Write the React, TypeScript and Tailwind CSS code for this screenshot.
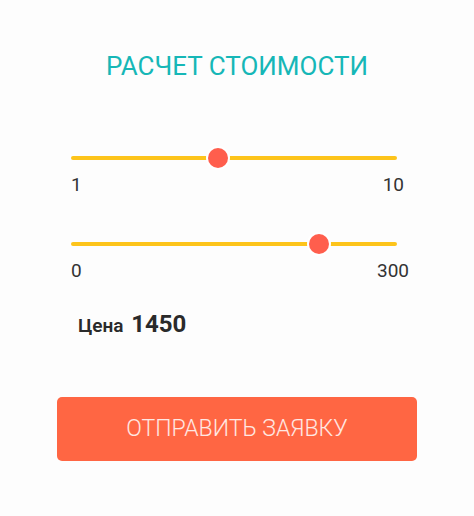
import { useState } from "react";

const Range = ({
  min,
  max,
  value,
  onChange,
}: {
  min: number;
  max: number;
  value: number;
  onChange: (v: number) => void;
}) => {
  const pct = ((value - min) / (max - min)) * 100;
  return (
    <div className="relative h-5 flex items-center">
      <div className="h-1 w-full rounded-full bg-[#fdc41b]" />
      <div
        className="absolute top-0 size-5 -ml-2.5 rounded-full bg-[#ff5e4d] ring-2 ring-white"
        style={{ left: `${pct}%` }}
      />
      <input
        type="range"
        min={min}
        max={max}
        step={0.01}
        value={value}
        onChange={(e) => onChange(Number(e.target.value))}
        className="absolute inset-0 w-full opacity-0 cursor-pointer"
      />
    </div>
  );
};

const App = () => {
  const [rooms, setRooms] = useState(5.06);
  const [area, setArea] = useState(228);

  return (
    <div className="min-h-[516px] bg-[#fdfdfd] font-['Roboto',sans-serif] text-[#333]">
      <h2 className="pt-[51px] text-center text-[26px] leading-[30px] text-[#16b7b7]">
        РАСЧЕТ СТОИМОСТИ
      </h2>

      <div className="mt-[67px] pl-[71px] pr-[77px]">
        <Range min={1} max={10} value={rooms} onChange={setRooms} />
        <div className="mt-[7px] flex justify-between text-[19px] leading-5 -mr-[7px]">
          <span>1</span>
          <span>10</span>
        </div>

        <div className="mt-[39px]">
          <Range min={0} max={300} value={area} onChange={setArea} />
        </div>
        <div className="mt-[7px] flex justify-between text-[19px] leading-5 -mr-[12px]">
          <span>0</span>
          <span>300</span>
        </div>

        <p className="mt-[29px] ml-[7px] font-semibold text-[19px] leading-7 text-[#2a2a2a]">
          Цена <span className="ml-[3px] text-[24px] font-bold">1450</span>
        </p>
      </div>

      <div className="mt-[57px] px-[57px]">
        <button className="h-16 w-full rounded-[5px] bg-[#ff6643] text-[23px] font-light text-white/85">
          ОТПРАВИТЬ ЗАЯВКУ
        </button>
      </div>
    </div>
  );
};

export default App;
